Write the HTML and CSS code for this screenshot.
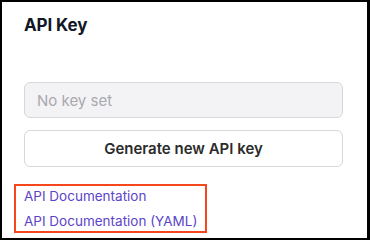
FILE: index.html
```html
<!DOCTYPE html>
<html>
<head>
<meta charset="utf-8">
<link rel="stylesheet" href="styles.css">
</head>
<body>
<div class="panel">
  <h2 class="title">API Key</h2>
  <input class="key-input" type="text" placeholder="No key set" disabled>
  <button class="gen-btn">Generate new API key</button>
  <div class="links">
    <a class="doc-link" href="#">API Documentation</a>
    <a class="doc-link" href="#">API Documentation (YAML)</a>
  </div>
</div>
</body>
</html>
```
FILE: styles.css
```css
html, body {
  margin: 0;
  padding: 0;
  background: #fff;
}
body {
  font-family: Inter, "Noto Sans", sans-serif;
}
.panel {
  box-sizing: border-box;
  width: 370px;
  height: 240px;
  border: 2px solid #000;
  border-right-width: 3px;
  padding: 12px 24px 0 22px;
  display: flex;
  flex-direction: column;
  align-items: stretch;
}
.title {
  margin: 0;
  font-size: 17px;
  font-weight: 700;
  line-height: 22px;
  color: #111827;
  letter-spacing: -0.1px;
}
.key-input {
  box-sizing: border-box;
  margin-top: 46px;
  height: 36px;
  border: 1px solid #d8d8dc;
  border-radius: 6px;
  background: #f3f3f5;
  padding: 0 12px;
  font-family: inherit;
  font-size: 15px;
  color: #333;
}
.key-input::placeholder {
  color: #a9a9ae;
}
.gen-btn {
  box-sizing: border-box;
  margin-top: 12px;
  height: 37px;
  border: 1px solid #d8d8dc;
  border-radius: 6px;
  background: #fff;
  font-family: inherit;
  font-size: 15px;
  font-weight: 600;
  color: #2b2b2b;
}
.links {
  margin-top: 17px;
  margin-left: -10px;
  align-self: flex-start;
  border: 2px solid #f4471e;
  padding: 0 8px 0 8px;
  display: flex;
  flex-direction: column;
}
.doc-link {
  font-size: 13.5px;
  line-height: 20px;
  height: 20px;
  color: #5b44c9;
  text-decoration: none;
}
.doc-link + .doc-link {
  margin-top: 5px;
}
```
